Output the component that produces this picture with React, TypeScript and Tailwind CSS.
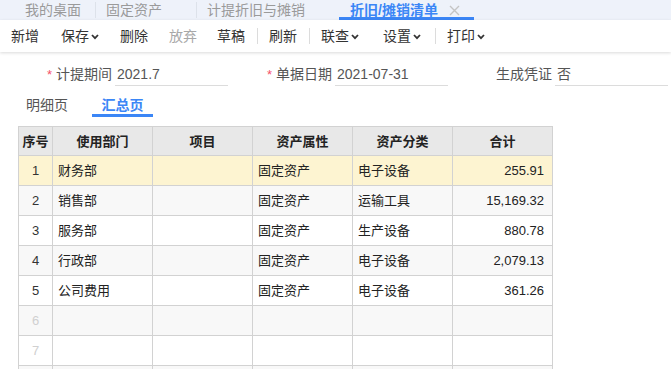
import React from "react";

const Chevron = () => (
  <svg width="8" height="6" viewBox="0 0 8 6" className="ml-[2px] mt-[1px]">
    <polyline points="1,1 4,4.2 7,1" fill="none" stroke="#333" strokeWidth="1.8" />
  </svg>
);

const Sep = () => <div className="w-px h-[16px] bg-[#dcdcdc]" />;

const rows = [
  { n: "1", dept: "财务部", attr: "固定资产", cls: "电子设备", sum: "255.91" },
  { n: "2", dept: "销售部", attr: "固定资产", cls: "运输工具", sum: "15,169.32" },
  { n: "3", dept: "服务部", attr: "固定资产", cls: "生产设备", sum: "880.78" },
  { n: "4", dept: "行政部", attr: "固定资产", cls: "电子设备", sum: "2,079.13" },
  { n: "5", dept: "公司费用", attr: "固定资产", cls: "电子设备", sum: "361.26" },
  { n: "6", dept: "", attr: "", cls: "", sum: "" },
  { n: "7", dept: "", attr: "", cls: "", sum: "" },
  { n: "", dept: "", attr: "", cls: "", sum: "" },
];

export default function App() {
  const font = { fontFamily: '"Liberation Sans", "Noto Sans CJK SC", sans-serif' };
  return (
    <div className="w-[671px] h-[369px] overflow-hidden bg-white text-[#333]" style={font}>
      {/* tab bar */}
      <div className="h-[20px] bg-[#eef2fa] flex items-center text-[14px] text-[#9a9a9a] leading-none relative">
        <span className="ml-[25px]">我的桌面</span>
        <div className="ml-[14px] w-px h-[16px] bg-[#dde2ea]" />
        <span className="ml-[10px]">固定资产</span>
        <div className="ml-[34px] w-px h-[16px] bg-[#dde2ea]" />
        <span className="ml-[10px]">计提折旧与摊销</span>
        <div className="ml-[34px] relative h-full flex items-center pl-[11px] pr-[14px]">
          <span className="text-[#3b86f6] font-bold">折旧/摊销清单</span>
          <svg width="11" height="11" viewBox="0 0 11 11" className="ml-[11px]">
            <path d="M1 1 L10 10 M10 1 L1 10" stroke="#c4c4c4" strokeWidth="1.4" />
          </svg>
          <div className="absolute left-0 right-0 bottom-0 h-[3px] bg-[#3b86f6]" />
        </div>
      </div>

      {/* toolbar */}
      <div className="h-[32px] flex items-center text-[14px] leading-none bg-white shadow-[0_1px_3px_rgba(0,0,0,0.15)] relative">
        <span className="ml-[11px]">新增</span>
        <span className="ml-[22px] flex items-center">保存<Chevron /></span>
        <span className="ml-[21px]">删除</span>
        <span className="ml-[21px] text-[#a8a8a8]">放弃</span>
        <span className="ml-[20px]">草稿</span>
        <div className="ml-[12px]"><Sep /></div>
        <span className="ml-[11px]">刷新</span>
        <div className="ml-[12px]"><Sep /></div>
        <span className="ml-[11px] flex items-center">联查<Chevron /></span>
        <span className="ml-[24px] flex items-center">设置<Chevron /></span>
        <div className="ml-[14px]"><Sep /></div>
        <span className="ml-[11px] flex items-center">打印<Chevron /></span>
      </div>

      {/* form row */}
      <div className="mt-[12px] flex items-end text-[14px] text-[#555] leading-none pl-[8px]">
        {[
          { label: "计提期间", value: "2021.7", req: true },
          { label: "单据日期", value: "2021-07-31", req: true },
          { label: "生成凭证", value: "否", req: false },
        ].map((f) => (
          <div key={f.label} className="flex items-end w-[220px]">
            <div className="w-[104px] flex justify-end items-center h-[22px] pb-[2px]">
              {f.req && <span className="text-[#f5506a] mr-[4px] text-[13px]">*</span>}
              <span>{f.label}</span>
            </div>
            <div className="ml-[3px] w-[113px] h-[22px] border-b border-[#dcdcdc] flex items-center pl-[2px] pb-[2px]">
              {f.value}
            </div>
          </div>
        ))}
      </div>

      {/* sub tabs */}
      <div className="mt-[9px] flex text-[14px] leading-none h-[22px] items-start">
        <span className="ml-[26px] pt-[3px] text-[#555]">明细页</span>
        <div className="ml-[24px] w-[61px] h-[22px] flex justify-center pt-[3px] border-b-[3px] border-[#3b86f6] text-[#3b86f6] font-bold">
          汇总页
        </div>
      </div>

      {/* table */}
      <table className="mt-[9px] ml-[18px] border-collapse text-[13px] leading-none">
        <thead>
          <tr className="h-[29px] bg-[#e8e8e8] font-bold text-[#222]">
            <th className="w-[34px] border border-[#d2d2d2] px-0">序号</th>
            <th className="w-[100px] border border-[#d2d2d2]">使用部门</th>
            <th className="w-[100px] border border-[#d2d2d2]">项目</th>
            <th className="w-[100px] border border-[#d2d2d2]">资产属性</th>
            <th className="w-[100px] border border-[#d2d2d2]">资产分类</th>
            <th className="w-[100px] border border-[#d2d2d2]">合计</th>
          </tr>
        </thead>
        <tbody>
          {rows.map((r, i) => {
            const bg = i === 0 ? "bg-[#fdf4d1]" : i % 2 === 1 ? "bg-[#f8f8f8]" : "bg-white";
            return (
              <tr key={i} className={`h-[30px] ${bg}`}>
                <td className={`border border-[#d2d2d2] text-center ${i >= 5 ? "text-[#d0d0d0]" : "text-[#333]"}`}>{r.n}</td>
                <td className="border border-[#d2d2d2] pl-[5px] text-[#222]">{r.dept}</td>
                <td className="border border-[#d2d2d2]"></td>
                <td className="border border-[#d2d2d2] pl-[5px] text-[#222]">{r.attr}</td>
                <td className="border border-[#d2d2d2] pl-[5px] text-[#222]">{r.cls}</td>
                <td className="border border-[#d2d2d2] text-right pr-[8px] text-[#222]">{r.sum}</td>
              </tr>
            );
          })}
        </tbody>
      </table>
    </div>
  );
}
